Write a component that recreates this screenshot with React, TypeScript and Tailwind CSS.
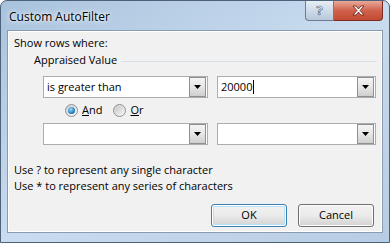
import type { ReactNode } from "react";

const font = { fontFamily: '"Open Sans", "Liberation Sans", sans-serif' };

function DropButton() {
  return (
    <div className="flex h-full w-[17px] items-center justify-center border border-[#8e8f8f] bg-gradient-to-b from-[#f4f4f4] via-[#e6e6e6] to-[#cfcfcf]">
      <svg width="7" height="4" viewBox="0 0 7 4">
        <path d="M0 0h7L3.5 4z" fill="#000" />
      </svg>
    </div>
  );
}

function Combo({ width, children }: { width: string; children?: ReactNode }) {
  return (
    <div
      className={`flex h-[22px] items-center border border-[#abadb3] bg-white pr-px ${width}`}
    >
      <div className="flex flex-1 items-center pl-[3px] text-[11px] text-black">{children}</div>
      <div className="h-[20px]">
        <DropButton />
      </div>
    </div>
  );
}

function Radio({ checked, label }: { checked?: boolean; label: ReactNode }) {
  return (
    <div className="flex items-center gap-[4px]">
      <div className="flex h-[13px] w-[13px] items-center justify-center rounded-full border border-[#8f8f8f] bg-gradient-to-br from-[#d0d0d0] to-[#fbfbfb]">
        {checked ? (
          <div className="h-[7px] w-[7px] rounded-full bg-[radial-gradient(circle_at_40%_35%,#a8dcf8,#1f7fc0_60%,#0a4f8a)]" />
        ) : (
          <div className="h-[9px] w-[9px] rounded-full bg-gradient-to-br from-[#c8c8c8] to-[#f4f4f4]" />
        )}
      </div>
      <span className="text-[11px] text-black">{label}</span>
    </div>
  );
}

function PushButton({ children, isDefault }: { children: ReactNode; isDefault?: boolean }) {
  return (
    <div
      className={`flex h-[23px] w-[76px] items-center justify-center rounded-[3px] border bg-gradient-to-b from-[#f2f2f2] via-[#ebebeb] to-[#d2d2d2] text-[11px] text-black ${
        isDefault
          ? "border-[#3c7fb1] shadow-[inset_0_0_0_1px_#fff,inset_0_0_0_2px_#b8e1f7]"
          : "border-[#707070] shadow-[inset_0_0_0_1px_#fcfcfc]"
      }`}
    >
      {children}
    </div>
  );
}

export default function App() {
  return (
    <div className="h-[243px] w-[390px] bg-white" style={font}>
      <div className="flex h-[243px] w-[390px] flex-col rounded-t-[7px] border border-[#4d6178] bg-gradient-to-br from-[#a9c3dd] via-[#c9dcef] to-[#b7cde3]">
        <div className="flex h-[29px] items-start">
          <div className="ml-[8px] mt-[7px] flex-1 text-[12px] text-black [text-shadow:0_0_6px_#fff,0_0_3px_#fff]">
            Custom AutoFilter
          </div>
          <div className="mr-[6px] flex h-[20px]">
            <div className="flex w-[29px] items-center justify-center rounded-bl-[4px] border border-t-0 border-[#6b7d92] bg-gradient-to-b from-[#e6eef6] via-[#cfdbe8] to-[#b8c8da]">
              <span className="text-[13px] font-bold leading-none text-white [-webkit-text-stroke:0.6px_#485a70]">
                ?
              </span>
            </div>
            <div className="flex w-[49px] items-center justify-center rounded-br-[4px] border border-l-0 border-t-0 border-[#7c2a22] bg-gradient-to-b from-[#e9a99b] via-[#d0614c] to-[#c24a33]">
              <svg width="13" height="11" viewBox="0 0 13 11">
                <path
                  d="M1 1h3l2.5 3L9 1h3L8 5.5 12 10H9L6.5 7 4 10H1l4-4.5z"
                  fill="#fff"
                  stroke="#5b1d14"
                  strokeWidth="0.8"
                  strokeLinejoin="round"
                />
              </svg>
            </div>
          </div>
        </div>
        <div className="mx-[6px] mb-[9px] flex flex-1 flex-col border border-[#8a9bb0] bg-[#f1f1f1] shadow-[inset_0_0_0_1px_#fff]">
          <div className="ml-[6px] mt-[4px] h-[15px] text-[11px] leading-[15px] text-black">
            Show rows where:
          </div>
          <div className="mt-[2px] flex h-[15px] items-center pl-[26px] pr-[5px]">
            <span className="text-[11px] leading-[15px] text-black">Appraised Value</span>
            <div className="ml-[4px] mt-[4px] h-px flex-1 bg-[#d5dfe5]" />
          </div>
          <div className="ml-[35px] mt-[9px] flex gap-[9px]">
            <Combo width="w-[165px]">is greater than</Combo>
            <Combo width="w-[159px]">
              20000<span className="ml-px h-[14px] w-px bg-black" />
            </Combo>
          </div>
          <div className="ml-[57px] mt-[5px] flex h-[15px] items-center gap-[11px]">
            <Radio
              checked
              label={
                <>
                  <span className="underline">A</span>nd
                </>
              }
            />
            <Radio
              label={
                <>
                  <span className="underline">O</span>r
                </>
              }
            />
          </div>
          <div className="ml-[35px] mt-[5px] flex gap-[9px]">
            <Combo width="w-[165px]" />
            <Combo width="w-[159px]" />
          </div>
          <div className="ml-[6px] mt-[17px] text-[11px] leading-[16px] text-black">
            <div>Use ? to represent any single character</div>
            <div>Use * to represent any series of characters</div>
          </div>
          <div className="mr-[8px] mt-[10px] flex justify-end gap-[11px]">
            <PushButton isDefault>OK</PushButton>
            <PushButton>Cancel</PushButton>
          </div>
        </div>
      </div>
    </div>
  );
}
